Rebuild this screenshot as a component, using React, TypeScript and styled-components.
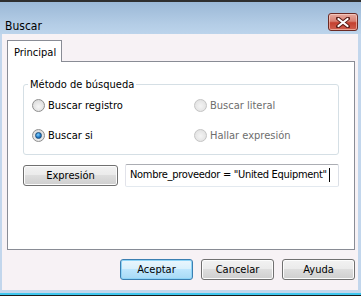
import React from "react";
import styled, { createGlobalStyle } from "styled-components";

const Global = createGlobalStyle`
  html, body { margin: 0; padding: 0; background: #fff; }
  body { font-family: "DejaVu Sans Condensed", "Liberation Sans", sans-serif; font-size: 11px; color: #000; }
  * { box-sizing: border-box; }
`;

const Window = styled.div`
  width: 361px;
  height: 296px;
  display: flex;
  flex-direction: column;
  border-top: 2px solid #2e2e2e;
  border-bottom: 1px solid #1a1a1a;
  background: #c2d6ec;
  overflow: hidden;
`;

const TitleBar = styled.div`
  height: 32px;
  flex: none;
  display: flex;
  align-items: center;
  justify-content: space-between;
  padding: 0 3px 0 5px;
  background: linear-gradient(#9bb8d6, #b4cde6 70%, #bcd4eb);
  font-size: 12px;
`;

const TitleText = styled.span`
  margin-top: 15px;
`;

const CloseButton = styled.div`
  width: 30px;
  height: 18px;
  margin-top: 8px;
  border: 1px solid #6b2a24;
  border-radius: 3px;
  background: linear-gradient(#e6aa9f 0%, #d88072 45%, #c4402f 55%, #d0604f 100%);
  box-shadow: inset 0 0 0 1px rgba(255, 220, 210, 0.55);
  display: flex;
  align-items: center;
  justify-content: center;
`;

const FrameRow = styled.div`
  flex: 1;
  display: flex;
  padding: 0 6px 0 2px;
`;

const Client = styled.div`
  flex: 1;
  display: flex;
  flex-direction: column;
  background: #f7f2f5;
  padding: 6px 3px 8px 5px;
`;

const BottomFrame = styled.div`
  height: 5px;
  flex: none;
  border-bottom: 2px solid #3fc6ee;
`;

const TabStrip = styled.div`
  display: flex;
  height: 21px;
  flex: none;
`;

const Tab = styled.div`
  width: 55px;
  height: 22px;
  border: 1px solid #898c95;
  border-bottom: none;
  background: #fff;
  padding: 5px 0 0 6px;
  position: relative;
  z-index: 1;
`;

const TabPanel = styled.div`
  height: 189px;
  flex: none;
  border: 1px solid #898c95;
  background: #fff;
  padding: 16px 15px 0 15px;
  display: flex;
  flex-direction: column;
`;

const GroupBox = styled.fieldset`
  margin: 0;
  border: 1px solid #d5dfe5;
  border-radius: 3px;
  padding: 6px 8px 11px 8px;
  display: grid;
  grid-template-columns: 162px 1fr;
  row-gap: 14px;
`;

const Legend = styled.legend`
  padding: 0 2px;
  margin-left: -4px;
  line-height: 13px;
`;

const RadioRow = styled.label<{ $disabled?: boolean }>`
  display: flex;
  align-items: center;
  gap: 3px;
  height: 16px;
  color: ${(p) => (p.$disabled ? "#6d6d6d" : "#000")};
`;

const RadioCircle = styled.span<{ $disabled?: boolean }>`
  width: 13px;
  height: 13px;
  border-radius: 50%;
  flex: none;
  border: 1px solid ${(p) => (p.$disabled ? "#c4c4c4" : "#8f8f8f")};
  background: ${(p) =>
    p.$disabled
      ? "radial-gradient(circle at 50% 55%, #f4f4f4, #dcdcdc)"
      : "radial-gradient(circle at 50% 60%, #f6f6f6, #d4d4d4)"};
  display: flex;
  align-items: center;
  justify-content: center;
`;

const RadioDot = styled.span`
  width: 7px;
  height: 7px;
  border-radius: 50%;
  background: radial-gradient(circle at 40% 35%, #7fd1ff, #1b74c4 60%, #0b4f8f);
  border: 1px solid #1f4f7a;
`;

const ExprRow = styled.div`
  display: flex;
  align-items: center;
  margin-top: 9px;
  gap: 7px;
`;

const Button = styled.button<{ $default?: boolean; $w: number }>`
  width: ${(p) => p.$w}px;
  height: 21px;
  font: inherit;
  color: #000;
  padding: 0;
  border-radius: 3px;
  border: 1px solid ${(p) => (p.$default ? "#3c7fb1" : "#707070")};
  background: ${(p) =>
    p.$default
      ? "linear-gradient(#eaf6fd 0%, #d9f0fc 45%, #bee6fd 50%, #a7d9f5 100%)"
      : "linear-gradient(#f2f2f2 0%, #ebebeb 45%, #dddddd 50%, #cfcfcf 100%)"};
  box-shadow: inset 0 0 0 1px ${(p) => (p.$default ? "#8ed4f7" : "#fcfcfc")};
`;

const TextBox = styled.div`
  width: 214px;
  height: 23px;
  border: 1px solid #abadb3;
  border-left-color: #e2e3ea;
  border-right-color: #dbdfe6;
  border-bottom-color: #e3e9ef;
  border-radius: 2px;
  background: #fff;
  padding: 3px 0 0 4px;
  white-space: nowrap;
  letter-spacing: -0.3px;
  display: flex;
  align-items: flex-start;
  overflow: hidden;
`;

const Caret = styled.span`
  display: inline-block;
  width: 1px;
  height: 14px;
  background: #000;
  margin-left: 2px;
`;

const ButtonRow = styled.div`
  display: flex;
  justify-content: flex-end;
  gap: 8px;
  margin-top: 9px;
`;

export default function App() {
  return (
    <>
      <Global />
      <Window>
        <TitleBar>
          <TitleText>Buscar</TitleText>
          <CloseButton>
            <svg width="14" height="11" viewBox="0 0 14 11">
              <path d="M2 1.5 L12 9.5 M12 1.5 L2 9.5" stroke="#5a1e18" strokeWidth="4" strokeLinecap="round" />
              <path d="M2.5 2 L11.5 9 M11.5 2 L2.5 9" stroke="#ffffff" strokeWidth="2.2" strokeLinecap="round" />
            </svg>
          </CloseButton>
        </TitleBar>
        <FrameRow>
          <Client>
            <TabStrip>
              <Tab>Principal</Tab>
            </TabStrip>
            <TabPanel>
              <GroupBox>
                <Legend>Método de búsqueda</Legend>
                <RadioRow>
                  <RadioCircle />
                  Buscar registro
                </RadioRow>
                <RadioRow $disabled>
                  <RadioCircle $disabled />
                  Buscar literal
                </RadioRow>
                <RadioRow>
                  <RadioCircle>
                    <RadioDot />
                  </RadioCircle>
                  Buscar si
                </RadioRow>
                <RadioRow $disabled>
                  <RadioCircle $disabled />
                  Hallar expresión
                </RadioRow>
              </GroupBox>
              <ExprRow>
                <Button $w={95}>Expresión</Button>
                <TextBox>
                  Nombre_proveedor = "United Equipment"
                  <Caret />
                </TextBox>
              </ExprRow>
            </TabPanel>
            <ButtonRow>
              <Button $default $w={73}>Aceptar</Button>
              <Button $w={73}>Cancelar</Button>
              <Button $w={73}>Ayuda</Button>
            </ButtonRow>
          </Client>
        </FrameRow>
        <BottomFrame />
      </Window>
    </>
  );
}
